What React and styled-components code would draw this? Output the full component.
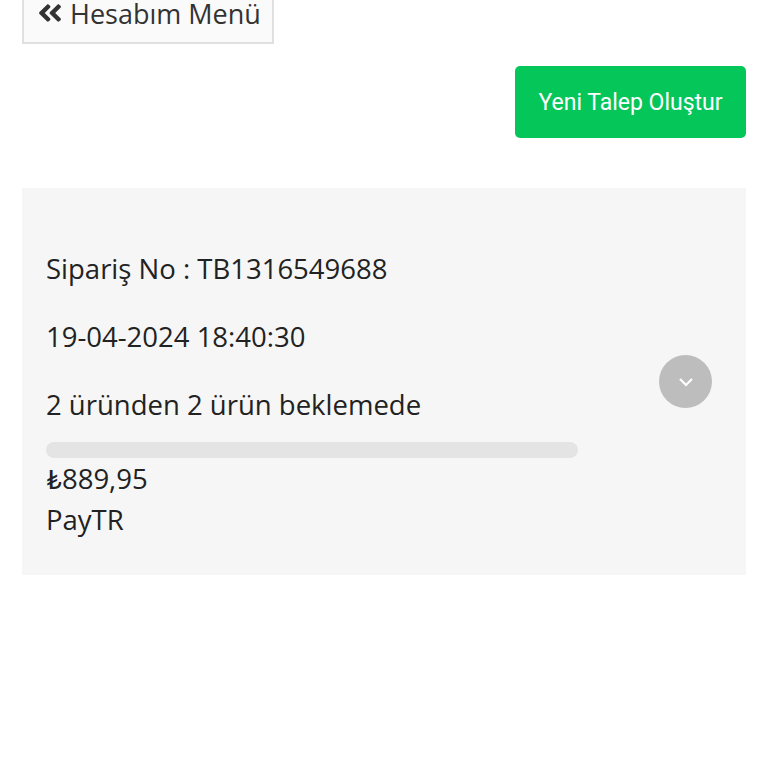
import React from 'react'
import styled, { createGlobalStyle } from 'styled-components'
import { FaAngleDoubleLeft } from 'react-icons/fa'

const GlobalStyle = createGlobalStyle`
  html, body {
    margin: 0;
    padding: 0;
    background: #fff;
    font-family: "Open Sans", Lato, sans-serif;
    color: #222;
  }
  * { box-sizing: border-box; }
`

const Page = styled.div`
  padding: 0 22px;
  width: 768px;
`

const BackLink = styled.a`
  display: inline-flex;
  align-items: center;
  gap: 6px;
  margin-top: -16px;
  height: 60px;
  padding: 0 11px 0 12px;
  background: #fafafa;
  border: 2px solid #e0e0e0;
  border-top: none;
  color: #333;
  font-size: 27px;
  text-decoration: none;

  svg {
    width: 28px;
    height: 28px;
  }
`

const Actions = styled.div`
  display: flex;
  justify-content: flex-end;
  margin-top: 22px;
`

const GreenButton = styled.button`
  width: 231px;
  height: 72px;
  border: none;
  border-radius: 5px;
  background: #05c659;
  color: #fff;
  font-family: Roboto, sans-serif;
  font-size: 23px;
  cursor: pointer;
`

const OrderCard = styled.div`
  display: flex;
  align-items: center;
  justify-content: space-between;
  margin-top: 50px;
  padding: 0 34px 0 24px;
  background: #f6f6f6;
`

const Info = styled.div`
  width: 532px;
  padding: 62px 0 35px;
`

const Line = styled.p`
  margin: 0 0 ${p => (p.$tight ? 0 : 30)}px;
  font-size: 27.5px;
  line-height: ${p => (p.$tight ? 41 : 38)}px;
  color: #222;
`

const Progress = styled.div`
  height: 16px;
  margin-top: -12px;
  border-radius: 8px;
  background: #e4e4e4;
`

const Toggle = styled.button`
  display: flex;
  align-items: center;
  justify-content: center;
  width: 53px;
  height: 53px;
  padding: 0;
  border: none;
  border-radius: 50%;
  background: #bdbdbd;
  cursor: pointer;
`

const App = () => {
  return (
    <>
      <GlobalStyle />
      <Page>
        <BackLink href="#">
          <FaAngleDoubleLeft />
          Hesabım Menü
        </BackLink>
        <Actions>
          <GreenButton>Yeni Talep Oluştur</GreenButton>
        </Actions>
        <OrderCard>
          <Info>
            <Line>Sipariş No : TB1316549688</Line>
            <Line>19-04-2024 18:40:30</Line>
            <Line>2 üründen 2 ürün beklemede</Line>
            <Progress />
            <Line $tight>₺889,95</Line>
            <Line $tight>PayTR</Line>
          </Info>
          <Toggle aria-label="Detaylar">
            <svg width="16" height="10" viewBox="0 0 16 10">
              <path d="M2 2 L8 8 L14 2" fill="none" stroke="#fff" strokeWidth="2.2" />
            </svg>
          </Toggle>
        </OrderCard>
      </Page>
    </>
  )
}

export default App
